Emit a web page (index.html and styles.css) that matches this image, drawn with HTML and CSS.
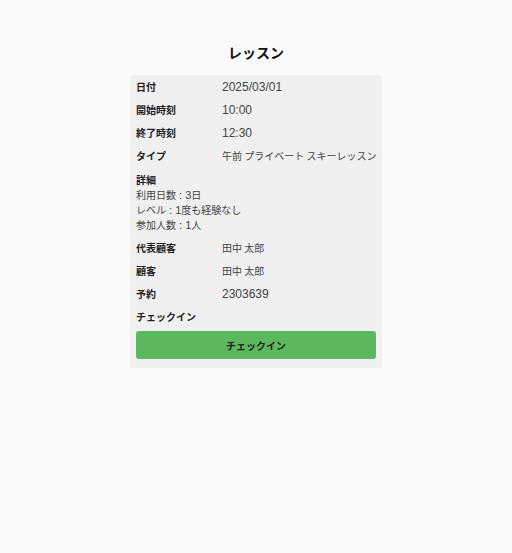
FILE: index.html
```html
<!DOCTYPE html>
<html lang="ja">
<head>
    <meta charset="UTF-8">
    <meta name="viewport" content="width=device-width, initial-scale=1.0">
    <title>レッスン</title>
    <link rel="stylesheet" href="styles.css">
</head>
<body>
    <h2 class="title">レッスン</h2>
    <div class="card">
        <div class="row">
            <span class="label">日付</span>
            <span class="value num">2025/03/01</span>
        </div>
        <div class="row">
            <span class="label">開始時刻</span>
            <span class="value num">10:00</span>
        </div>
        <div class="row">
            <span class="label">終了時刻</span>
            <span class="value num">12:30</span>
        </div>
        <div class="row">
            <span class="label">タイプ</span>
            <span class="value">午前 プライベート スキーレッスン</span>
        </div>
        <div class="detail">
            <div class="label">詳細</div>
            <div>利用日数<span class="num"> : 3</span>日</div>
            <div>レベル<span class="num"> : 1</span>度も経験なし</div>
            <div>参加人数<span class="num"> : 1</span>人</div>
        </div>
        <div class="row">
            <span class="label">代表顧客</span>
            <span class="value">田中 太郎</span>
        </div>
        <div class="row">
            <span class="label">顧客</span>
            <span class="value">田中 太郎</span>
        </div>
        <div class="row">
            <span class="label">予約</span>
            <span class="value num">2303639</span>
        </div>
        <div class="row">
            <span class="label">チェックイン</span>
        </div>
        <button class="checkin-button">チェックイン</button>
    </div>
</body>
</html>
```

FILE: styles.css
```css
body {
    font-family: "Noto Sans CJK JP", "Noto Sans", sans-serif;
    margin: 0;
    padding: 0;
    background-color: #fafafa;
    color: #333;
}
.title {
    text-align: center;
    margin: 41px 0 12px;
    font-size: 14px;
    line-height: 22px;
    color: #111;
}
.card {
    width: 252px;
    margin: 0 auto;
    background-color: #f0f0f0;
    padding: 0 6px 9px;
    box-sizing: border-box;
    font-size: 10px;
}
.row {
    display: flex;
    align-items: center;
    height: 23px;
}
.label {
    width: 86px;
    font-weight: bold;
    color: #222;
    flex-shrink: 0;
}
.value {
    color: #444;
    white-space: nowrap;
}
/* 数字は欧文フォントで少し大きめ */
.num {
    font-family: "Liberation Sans", Arial, sans-serif;
    font-size: 12px;
}
.detail {
    padding: 5px 0 4px;
    line-height: 15px;
    color: #444;
}
.detail > div {
    height: 15px;
}
.detail .num {
    font-size: 11px;
    line-height: 1;
}
.checkin-button {
    display: block;
    width: 100%;
    height: 28px;
    margin-top: 3px;
    background-color: #5cb85c;
    border: none;
    border-radius: 3px;
    font-family: inherit;
    font-size: 10px;
    font-weight: bold;
    color: #222;
    cursor: pointer;
}
```
